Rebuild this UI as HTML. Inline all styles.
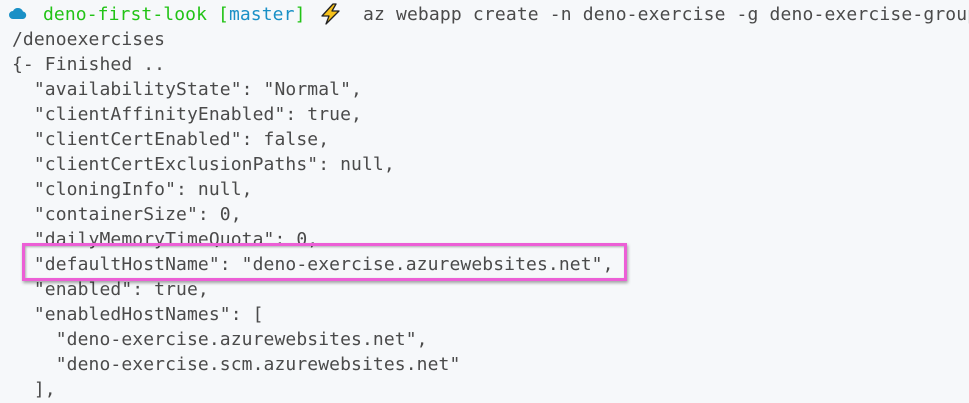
<!DOCTYPE html>
<html><head><meta charset="utf-8"><style>
html,body{margin:0;padding:0;background:#f6f8fa;width:969px;height:403px;overflow:hidden}
.t{position:absolute;font-family:"DejaVu Sans Mono","Liberation Mono",monospace;font-size:18px;letter-spacing:0.1px;color:#4a4a4a;white-space:pre;line-height:25px}
.g{color:#22c316}.b{color:#1a90c6}
.box{position:absolute;left:22px;top:243px;width:599px;height:32px;border:3px solid #ec5fd6;box-shadow:1px 2px 3px rgba(0,0,0,.35),inset 1px 1px 2px rgba(0,0,0,.3)}
</style></head><body>
<svg style="position:absolute;left:9px;top:7px" width="18" height="12" viewBox="0 0 18 12"><path d="M4 12 A4 4 0 0 1 4 4 A5.5 5.5 0 0 1 14 4.5 A3.8 3.8 0 0 1 14 12 Z" fill="#1a90c6"/></svg>
<div class="t" style="left:43px;top:2px"><span class="g">deno-first-look</span> <span class="g">[</span><span class="b">master</span><span class="g">]</span></div>
<svg style="position:absolute;left:319px;top:3px" width="24" height="22" viewBox="0 0 24 22"><path d="M14 1 L3 13 L10 13 L7 21 L20 8 L13 8 L17 1 Z" fill="#f7c21b" stroke="#222" stroke-width="1.3" stroke-linejoin="round"/></svg>
<div class="t" style="left:363px;top:2px;letter-spacing:0.15px">az webapp create -n deno-exercise -g deno-exercise-group</div>
<div class="t" style="left:12px;top:26.5px">/denoexercises
{- Finished ..
  "availabilityState": "Normal",
  "clientAffinityEnabled": true,
  "clientCertEnabled": false,
  "clientCertExclusionPaths": null,
  "cloningInfo": null,
  "containerSize": 0,
  "dailyMemoryTimeQuota": 0,
  "defaultHostName": "deno-exercise.azurewebsites.net",
  "enabled": true,
  "enabledHostNames": [
    "deno-exercise.azurewebsites.net",
    "deno-exercise.scm.azurewebsites.net"
  ],</div>
<div class="box"></div>
</body></html>
